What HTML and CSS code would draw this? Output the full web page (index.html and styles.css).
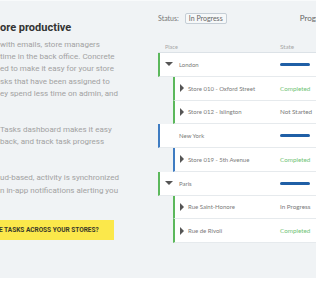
FILE: index.html
```html
<!DOCTYPE html>
<html lang="en">
<head>
    <meta charset="UTF-8">
    <meta name="viewport" content="width=device-width, initial-scale=1.0">
    <title>Tasks - Store productivity</title>
    <link rel="stylesheet" href="styles.css">
</head>
<body>
    <section class="feature">
        <div class="intro">
            <h2>ore productive</h2>
            <p>with emails, store managers<br>time in the back office. Concrete<br>ed to make it easy for your store<br>sks that have been assigned to<br>ey spend less time on admin, and</p>
            <p class="gap">Tasks dashboard makes it easy<br>back, and track task progress</p>
            <p class="gap">ud-based, activity is synchronized<br>n in-app notifications alerting you</p>
            <a href="#" class="cta">E TASKS ACROSS YOUR STORES?</a>
        </div>

        <div class="demo">
            <div class="filters">
                <span>Status:</span>
                <span class="chip">In Progress</span>
                <span class="prog">Progress</span>
            </div>

            <div class="table">
                <div class="thead">
                    <span class="name">Place</span>
                    <span class="state">State</span>
                </div>

                <div class="row green">
                    <span class="caret down"></span>
                    <span class="name">London</span>
                    <span class="state"><span class="bar"></span></span>
                </div>
                <div class="row child green">
                    <span class="caret right"></span>
                    <span class="name">Store 010 - Oxford Street</span>
                    <span class="state done">Completed</span>
                </div>
                <div class="row child green">
                    <span class="caret right"></span>
                    <span class="name">Store 012 - Islington</span>
                    <span class="state">Not Started</span>
                </div>

                <div class="row blue">
                    <span class="caret"></span>
                    <span class="name">New York</span>
                    <span class="state"><span class="bar"></span></span>
                </div>
                <div class="row child blue">
                    <span class="caret right"></span>
                    <span class="name">Store 019 - 5th Avenue</span>
                    <span class="state done">Completed</span>
                </div>

                <div class="row green">
                    <span class="caret down"></span>
                    <span class="name">Paris</span>
                    <span class="state"><span class="bar"></span></span>
                </div>
                <div class="row child green">
                    <span class="caret right"></span>
                    <span class="name">Rue Saint-Honore</span>
                    <span class="state">In Progress</span>
                </div>
                <div class="row child green">
                    <span class="caret right"></span>
                    <span class="name">Rue de Rivoli</span>
                    <span class="state done">Completed</span>
                </div>
            </div>
        </div>
    </section>
</body>
</html>
```

FILE: styles.css
```css
* {
    margin: 0;
    padding: 0;
    box-sizing: border-box;
}

body {
    font-family: Roboto, 'Liberation Sans', sans-serif;
    background: #fff;
    overflow: hidden;
}

.feature {
    display: flex;
    height: 278px;
    background: #f0f3f5;
    border-top: 1px solid #f8fafb;
}

/* left copy, cut by the viewport */
.intro {
    width: 150px;
    flex-shrink: 0;
    padding-top: 20px;
    white-space: nowrap;
}

.intro h2 {
    font-size: 11px;
    font-weight: 700;
    line-height: 14px;
    color: #333;
}

.intro p {
    margin-top: 4px;
    font-size: 8px;
    line-height: 12.2px;
    color: #a2a2a2;
}

.intro p.gap {
    margin-top: 24px;
}

.cta {
    display: block;
    width: 114px;
    height: 20px;
    margin-top: 23px;
    background: #fbe84b;
    color: #3a3a2a;
    font-size: 6.5px;
    font-weight: 700;
    line-height: 20px;
    text-decoration: none;
    text-indent: -1px;
}

/* right demo */
.demo {
    flex: 1;
    min-width: 0;
    padding: 11px 0 0 8px;
    font-family: Lato, 'Open Sans', sans-serif;
    white-space: nowrap;
    overflow: hidden;
}

.filters {
    display: flex;
    align-items: center;
    height: 12px;
    font-size: 7px;
    color: #777;
}

.chip {
    margin-left: 6px;
    height: 11px;
    padding: 0 3px;
    line-height: 9px;
    border: 1px solid #c5ced6;
    border-radius: 2px;
    background: #f6f8f9;
    color: #666;
}

.prog {
    margin-left: 73px;
    font-size: 8px;
    color: #666;
}

.table {
    margin-top: 17px;
}

.thead {
    display: flex;
    align-items: center;
    height: 12px;
    padding-left: 7px;
    border-bottom: 1px solid #dce2e7;
    font-size: 5.5px;
    color: #a8a8a8;
}

.row {
    display: flex;
    align-items: center;
    height: 23.75px;
    background: #fff;
    border-left: 2px solid #5cb85c;
    border-bottom: 1px solid #e6eaed;
    font-size: 6px;
    color: #7a7a7a;
}

.row.blue {
    border-left-color: #3f7cc2;
}

.row.child {
    margin-left: 15px;
}

.name {
    flex: 1;
}

.state {
    width: 36px;
    flex-shrink: 0;
    font-size: 6.3px;
}

.state.done {
    color: #72c476;
}

.caret {
    width: 8px;
    height: 8px;
    margin: 0 6px 0 5px;
    flex-shrink: 0;
}

.caret.down {
    height: 0;
    border-left: 4px solid transparent;
    border-right: 4px solid transparent;
    border-top: 4px solid #555;
}

.caret.right {
    width: 0;
    margin-right: 4px;
    border-top: 4px solid transparent;
    border-bottom: 4px solid transparent;
    border-left: 4px solid #555;
}

.bar {
    display: block;
    width: 30px;
    height: 3px;
    border-radius: 2px;
    background: #1f5fa6;
}
```
